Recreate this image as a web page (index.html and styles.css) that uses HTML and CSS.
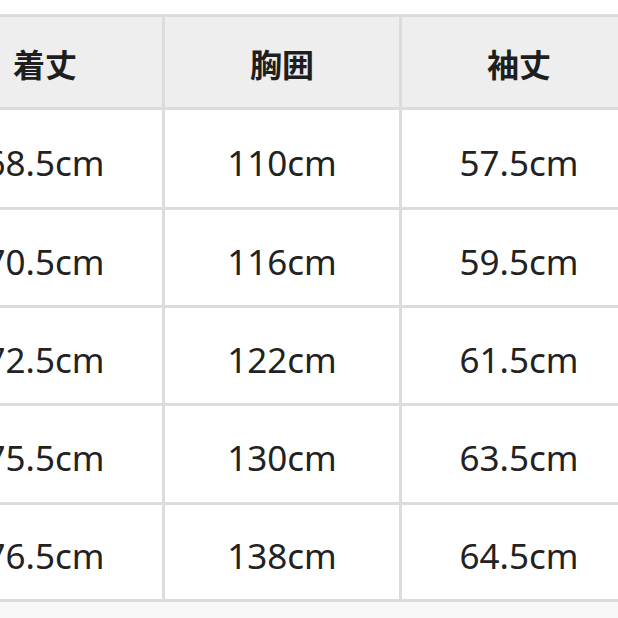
FILE: index.html
```html
<!DOCTYPE html>
<html lang="ja">
<head>
<meta charset="utf-8">
<link rel="stylesheet" href="styles.css">
</head>
<body>
<div class="page">
  <div class="size-table">
    <div class="cell head">着丈</div>
    <div class="cell head">胸囲</div>
    <div class="cell head">袖丈</div>
    <div class="cell">68.5cm</div>
    <div class="cell">110cm</div>
    <div class="cell">57.5cm</div>
    <div class="cell">70.5cm</div>
    <div class="cell">116cm</div>
    <div class="cell">59.5cm</div>
    <div class="cell">72.5cm</div>
    <div class="cell">122cm</div>
    <div class="cell">61.5cm</div>
    <div class="cell">75.5cm</div>
    <div class="cell">130cm</div>
    <div class="cell">63.5cm</div>
    <div class="cell">76.5cm</div>
    <div class="cell">138cm</div>
    <div class="cell">64.5cm</div>
  </div>
</div>
</body>
</html>
```

FILE: styles.css
```css
html, body {
  margin: 0;
  padding: 0;
  background: #f8f8f8;
  overflow: hidden;
}
.page {
  width: 618px;
  height: 618px;
  overflow: hidden;
  background: linear-gradient(#ffffff 0, #ffffff 14px, #f8f8f8 14px);
  padding-top: 14px;
  box-sizing: border-box;
}
.size-table {
  display: grid;
  grid-template-columns: 234px 234px 234px;
  grid-template-rows: 90px 97px 95px 95px 96px 94px;
  gap: 3px;
  padding: 3px;
  background: #dcdcdc;
  margin-left: -75px;
  width: max-content;
}
.cell {
  background: #ffffff;
  display: flex;
  align-items: center;
  justify-content: center;
  padding-top: 7px;
  box-sizing: border-box;
  font-family: "Noto Sans", "Open Sans", sans-serif;
  font-size: 35px;
  color: #222222;
}
.head {
  background: #eeeeee;
  padding-top: 1px;
  font-family: "Noto Sans CJK JP", "Noto Sans", sans-serif;
  font-weight: 700;
  font-size: 32px;
  color: #1e1e1e;
}
```
